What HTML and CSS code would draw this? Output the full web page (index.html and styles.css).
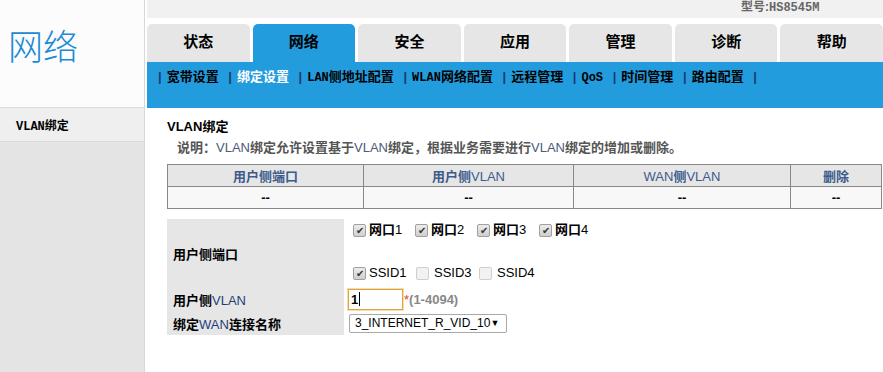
FILE: index.html
```html
<!doctype html>
<html lang="zh-CN">

  <head>
    <meta charset="utf-8">
    <meta name="viewport" content="width=device-width, initial-scale=1">
    <title>网络 - VLAN绑定</title>
    <link rel="stylesheet" href="styles.css">
  </head>

  <body>
    <aside class="sidebar">
      <div class="brand">网络</div>
      <ul class="side-menu">
        <li class="active"><span class="mono">VLAN</span>绑定</li>
      </ul>
    </aside>

    <div class="main">
      <div class="topbar"><span class="model">型号:<span class="mono">HS8545M</span></span></div>

      <nav class="tabs">
        <a class="tab">状态</a>
        <a class="tab active">网络</a>
        <a class="tab">安全</a>
        <a class="tab">应用</a>
        <a class="tab">管理</a>
        <a class="tab">诊断</a>
        <a class="tab">帮助</a>
      </nav>

      <div class="subnav">
        <span class="sep">|</span><a>宽带设置</a>
        <span class="sep">|</span><a class="current">绑定设置</a>
        <span class="sep">|</span><a><span class="mono">LAN</span>侧地址配置</a>
        <span class="sep">|</span><a><span class="mono">WLAN</span>网络配置</a>
        <span class="sep">|</span><a>远程管理</a>
        <span class="sep">|</span><a><span class="mono">QoS</span></a>
        <span class="sep">|</span><a>时间管理</a>
        <span class="sep">|</span><a>路由配置</a>
        <span class="sep">|</span>
      </div>

      <section class="content">
        <div class="title">VLAN绑定</div>
        <div class="desc">说明：<span class="en">VLAN</span>绑定允许设置基于<span class="en">VLAN</span>绑定，根据业务需要进行<span class="en">VLAN</span>绑定的增加或删除。</div>

        <table class="list">
          <colgroup>
            <col class="c1"><col class="c2"><col class="c3"><col class="c4">
          </colgroup>
          <tr class="head">
            <th>用户侧端口</th>
            <th>用户侧<span class="en">VLAN</span></th>
            <th><span class="en">WAN</span>侧<span class="en">VLAN</span></th>
            <th>删除</th>
          </tr>
          <tr class="row">
            <td>--</td>
            <td>--</td>
            <td>--</td>
            <td>--</td>
          </tr>
        </table>

        <table class="form">
          <tr class="ports">
            <th>用户侧端口</th>
            <td>
              <div class="checks">
                <label class="check"><span class="box on">✔</span><b>网口</b>1</label>
                <label class="check"><span class="box on">✔</span><b>网口</b>2</label>
                <label class="check"><span class="box on">✔</span><b>网口</b>3</label>
                <label class="check"><span class="box on">✔</span><b>网口</b>4</label>
              </div>
              <div class="checks ssid">
                <label class="check"><span class="box on">✔</span>SSID1</label>
                <label class="check"><span class="box off"></span>SSID3</label>
                <label class="check"><span class="box off"></span>SSID4</label>
              </div>
            </td>
          </tr>
          <tr class="vlan">
            <th>用户侧<span class="latin">VLAN</span></th>
            <td>
              <span class="field">1<span class="caret"></span></span><span class="req">*</span><span class="hint">(1-4094)</span>
            </td>
          </tr>
          <tr class="wan">
            <th>绑定<span class="latin">WAN</span>连接名称</th>
            <td>
              <span class="select">3_INTERNET_R_VID_10<span class="arrow">▼</span></span>
            </td>
          </tr>
        </table>
      </section>
    </div>
  </body>

</html>
```

FILE: styles.css
```css
html,
body {
  margin: 0;
  padding: 0;
  height: 100%;
}

body {
  display: flex;
  background: #fff;
  color: #000;
  font-family: "Liberation Sans", "Noto Sans CJK SC", sans-serif;
  font-size: 13px;
}

.mono {
  font-family: "Liberation Mono", monospace;
  font-size: 12px;
}

/* left column */

.sidebar {
  width: 144px;
  flex-shrink: 0;
  background: #e4e4e4;
  border-right: 1px solid #d8d8d8;
  margin-right: 2px;
}

.brand {
  height: 108px;
  box-sizing: border-box;
  padding: 23px 0 0 8px;
  background: #fcfcfc;
  border-bottom: 1px solid #dadada;
  color: #1b8ad4;
  font-family: "Noto Sans CJK SC", sans-serif;
  font-size: 35px;
  font-weight: 300;
  line-height: 44px;
}

.side-menu {
  list-style: none;
  margin: 0;
  padding: 0;
}

.side-menu li {
  height: 34px;
  box-sizing: border-box;
  padding: 3px 0 0 16px;
  line-height: 30px;
  background: #efefef;
  border-bottom: 1px solid #dadada;
  font-weight: bold;
  font-size: 12px;
}

/* header */

.main {
  flex: 1;
  min-width: 0;
}

.topbar {
  height: 18px;
  background: #f1f1f1;
  overflow: hidden;
  padding-left: 594px;
}

.model {
  display: block;
  line-height: 15px;
  color: #666;
  font-weight: bold;
  font-size: 12px;
}

.tabs {
  display: flex;
  gap: 3px;
  margin-top: 6px;
  height: 38px;
}

.tab {
  flex: 1;
  background: #e6e6e6;
  border-radius: 5px 5px 0 0;
  text-align: center;
  line-height: 34px;
  font-size: 15px;
  font-weight: bold;
  font-family: "Noto Sans CJK SC", sans-serif;
}

.tab.active {
  background: #239cdd;
}

.subnav {
  height: 46px;
  box-sizing: border-box;
  padding: 7px 0 0 10px;
  background: #239cdd;
  font-weight: bold;
  font-size: 13px;
  line-height: 16px;
  white-space: nowrap;
}

.subnav a {
  color: #000;
}

.subnav a.current {
  color: #fff;
}

.sep {
  color: #1b3a72;
  margin: 0 5px 0 1px;
}

.subnav a + .sep {
  margin-left: 6px;
}

/* content */

.content {
  padding: 11px 2px 0 20px;
}

.en {
  font-weight: normal;
}

.title {
  font-weight: bold;
  line-height: 16px;
}

.desc {
  margin-top: 5px;
  padding-left: 10px;
  color: #555;
  font-weight: bold;
  line-height: 16px;
}

.desc .en {
  color: #4a5a7a;
}

table {
  border-collapse: collapse;
}

.list {
  margin-top: 8px;
  width: 714px;
  table-layout: fixed;
  border: 1px solid #888;
}

.c1 { width: 196px; }
.c2 { width: 210px; }
.c3 { width: 217px; }
.c4 { width: 91px; }

.list th,
.list td {
  border: 1px solid #888;
  text-align: center;
  height: 21px;
  padding: 0;
  font-weight: bold;
}

.list th {
  background: #e6e6e6;
  color: #3d5b8c;
}

.list td {
  background: #f8f8f8;
}

.form {
  margin-top: 10px;
}

.form th {
  width: 171px;
  padding: 0 0 0 6px;
  background: #e6e6e6;
  text-align: left;
  font-weight: bold;
  white-space: nowrap;
}

.form td {
  padding: 0 0 0 4px;
}

.latin {
  font-weight: normal;
  color: #1d3f7a;
}

.ports td {
  padding-top: 3px;
  padding-bottom: 7px;
}

.checks {
  display: flex;
  height: 16px;
  align-items: center;
}

.checks.ssid {
  margin-top: 27px;
}

.check {
  display: flex;
  align-items: center;
  width: 62px;
  padding-left: 5px;
  box-sizing: border-box;
  line-height: 16px;
}

.ssid .check {
  width: 63px;
}

.check b {
  font-weight: bold;
}

.box {
  width: 11px;
  height: 11px;
  margin-right: 3px;
  border: 1px solid #a0a0a0;
  border-radius: 2px;
  font-size: 10px;
  line-height: 11px;
  text-align: center;
  color: #333;
}

.box.on {
  background: linear-gradient(#ececec, #cfcfcf);
}

.box.off {
  margin-right: 5px;
  border-color: #cfcfcf;
  background: #f2f2f2;
}

.vlan th,
.vlan td {
  height: 23px;
}

.wan th,
.wan td {
  height: 24px;
}

.field {
  display: inline-block;
  vertical-align: middle;
  width: 51px;
  height: 19px;
  padding-left: 2px;
  border: 1px solid #e2a43c;
  box-shadow: 0 0 0 1px #f6dcad;
  font-weight: bold;
  line-height: 19px;
}

.caret {
  display: inline-block;
  width: 1px;
  height: 14px;
  margin-left: 1px;
  background: #000;
  vertical-align: -2px;
}

.req {
  margin-left: 1px;
  color: #e32;
  vertical-align: middle;
}

.hint {
  color: #888;
  font-weight: bold;
  vertical-align: middle;
}

.select {
  display: inline-flex;
  align-items: center;
  justify-content: space-between;
  width: 158px;
  height: 19px;
  box-sizing: border-box;
  margin-left: 1px;
  padding: 0 7px 0 5px;
  border: 1px solid #a9a9a9;
  border-radius: 2px;
  font-size: 12px;
  vertical-align: middle;
}

.arrow {
  font-size: 9px;
}
```
